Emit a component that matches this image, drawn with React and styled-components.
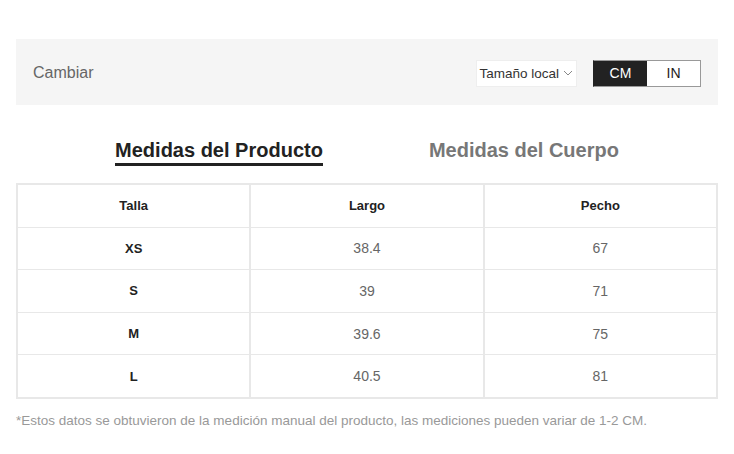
import React, { useState } from 'react';
import styled, { createGlobalStyle } from 'styled-components';

const GlobalStyle = createGlobalStyle`
  body {
    margin: 0;
    background: #fff;
    font-family: "Liberation Sans", Arial, sans-serif;
  }
`;

const rows = [
  { size: 'XS', largo: '38.4', pecho: '67' },
  { size: 'S', largo: '39', pecho: '71' },
  { size: 'M', largo: '39.6', pecho: '75' },
  { size: 'L', largo: '40.5', pecho: '81' },
];

function App() {
  const [unit, setUnit] = useState('CM');
  const [tab, setTab] = useState(0);

  return (
    <Page>
      <GlobalStyle />
      <Toolbar>
        <Label>Cambiar</Label>
        <Controls>
          <Select>
            Tamaño local
            <svg width="10" height="6" viewBox="0 0 10 6">
              <path d="M1 1l4 4 4-4" fill="none" stroke="#888" strokeWidth="1" />
            </svg>
          </Select>
          <Toggle>
            {['CM', 'IN'].map((u) => (
              <UnitButton key={u} $active={unit === u} onClick={() => setUnit(u)}>
                {u}
              </UnitButton>
            ))}
          </Toggle>
        </Controls>
      </Toolbar>

      <Tabs>
        {['Medidas del Producto', 'Medidas del Cuerpo'].map((t, i) => (
          <Tab key={t} $active={tab === i} onClick={() => setTab(i)}>
            {t}
          </Tab>
        ))}
      </Tabs>

      <Table>
        <thead>
          <tr>
            <Th>Talla</Th>
            <Th>Largo</Th>
            <Th>Pecho</Th>
          </tr>
        </thead>
        <tbody>
          {rows.map((r) => (
            <tr key={r.size}>
              <Td $bold>{r.size}</Td>
              <Td>{r.largo}</Td>
              <Td>{r.pecho}</Td>
            </tr>
          ))}
        </tbody>
      </Table>

      <Note>*Estos datos se obtuvieron de la medición manual del producto, las mediciones pueden variar de 1-2 CM.</Note>
    </Page>
  );
}

const Page = styled.div`
  padding: 39px 16px 0;
`;

const Toolbar = styled.div`
  display: flex;
  align-items: center;
  justify-content: space-between;
  height: 66px;
  padding: 0 17px;
  background: #f5f5f5;
`;

const Label = styled.span`
  font-size: 16px;
  color: #666;
  padding-top: 2px;
`;

const Controls = styled.div`
  display: flex;
  align-items: center;
  gap: 16px;
  padding-top: 2px;
`;

const Select = styled.div`
  display: flex;
  align-items: center;
  gap: 4px;
  height: 27px;
  padding: 0 3px 0 2px;
  background: #fff;
  border: 1px solid #eee;
  box-sizing: border-box;
  font-size: 13.5px;
  color: #333;
`;

const Toggle = styled.div`
  display: flex;
  border: 1px solid #999;
  border-left-color: #222;
`;

const UnitButton = styled.div`
  width: 53px;
  height: 25px;
  display: flex;
  align-items: center;
  justify-content: center;
  font-size: 14px;
  cursor: pointer;
  background: ${(p) => (p.$active ? '#222' : '#fff')};
  color: ${(p) => (p.$active ? '#fff' : '#222')};
`;

const Tabs = styled.div`
  display: flex;
  justify-content: center;
  gap: 106px;
  padding-top: 32px;
  height: 46px;
`;

const Tab = styled.div`
  font-size: 20px;
  font-weight: bold;
  line-height: 26px;
  height: 26px;
  color: ${(p) => (p.$active ? '#222' : '#777')};
  border-bottom: 3px solid ${(p) => (p.$active ? '#222' : 'transparent')};
  cursor: pointer;
`;

const Table = styled.table`
  width: 100%;
  border-collapse: collapse;
  border: 2px solid #e8e8e8;
  table-layout: fixed;
`;

const Th = styled.th`
  height: 41.6px;
  padding: 0;
  border: 1px solid #e8e8e8;
  border-left-width: 2px;
  font-size: 13px;
  font-weight: bold;
  color: #222;
`;

const Td = styled.td`
  height: 41.6px;
  padding: 0;
  border: 1px solid #e8e8e8;
  border-left-width: 2px;
  text-align: center;
  font-size: ${(p) => (p.$bold ? '13px' : '14px')};
  font-weight: ${(p) => (p.$bold ? 'bold' : 'normal')};
  color: ${(p) => (p.$bold ? '#222' : '#666')};
`;

const Note = styled.p`
  margin: 14px 0 0;
  font-size: 13.5px;
  color: #999;
`;

export default App;
